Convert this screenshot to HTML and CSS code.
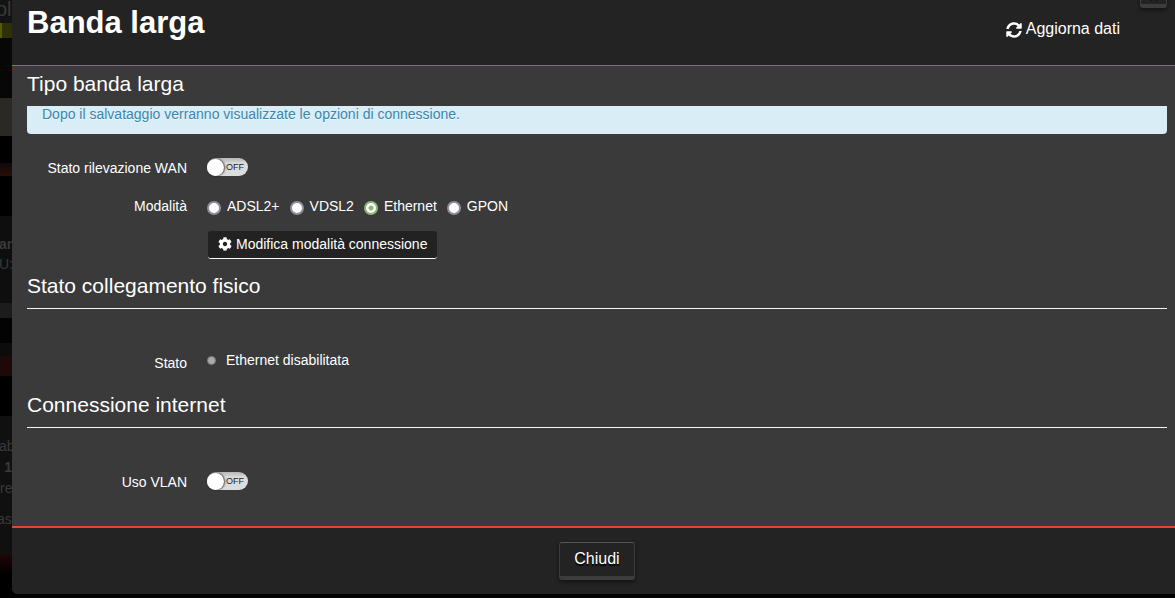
FILE: index.html
```
<!DOCTYPE html>
<html lang="it">

<head>
    <meta charset="UTF-8">
    <meta name="viewport" content="width=device-width, initial-scale=1.0">
    <title>Banda larga</title>
    <link rel="stylesheet" href="styles.css">
</head>

<body>
    <!-- dimmed page behind the modal -->
    <div class="backdrop" aria-hidden="true">
        <div class="strip strip_title">ol</div>
        <div class="strip strip_olive"></div>
        <div class="strip strip_dark"></div>
        <div class="strip strip_sand"></div>
        <div class="strip strip_gap"></div>
        <div class="strip strip_red"></div>
        <div class="strip strip_space"></div>
        <div class="strip strip_card">
            <p><b>an</b></p>
            <p>U:</p>
        </div>
        <div class="strip strip_bar"></div>
        <div class="strip strip_foot"></div>
        <div class="strip strip_wine"></div>
        <div class="strip strip_space"></div>
        <div class="strip strip_list">
            <p>ab</p>
            <p class="right"><b>1</b></p>
            <p class="right">re</p>
            <p class="last">as</p>
        </div>
        <div class="strip strip_end"></div>
    </div>

    <div class="modal" role="dialog" aria-labelledby="modal_title">
        <div class="modal_header">
            <h1 id="modal_title">Banda larga</h1>
            <a href="#" class="refresh">
                <svg viewBox="0 0 512 512" width="16" height="16"><path d="M370.72 133.28C339.458 104.008 298.888 87.962 255.848 88c-77.458.068-144.328 53.178-162.791 126.85-1.344 5.363-6.122 9.15-11.651 9.15H24.103c-7.498 0-13.194-6.807-11.807-14.176C33.933 94.924 134.813 8 256 8c66.448 0 126.791 26.136 171.315 68.685L463.03 40.97C478.149 25.851 504 36.559 504 57.941V192c0 13.255-10.745 24-24 24H345.941c-21.382 0-32.09-25.851-16.971-40.971l41.75-41.749zM32 296h134.059c21.382 0 32.09 25.851 16.971 40.971l-41.75 41.75c31.262 29.273 71.835 45.319 114.876 45.28 77.418-.07 144.315-53.144 162.787-126.849 1.344-5.363 6.122-9.15 11.651-9.15h57.304c7.498 0 13.194 6.807 11.807 14.176C478.067 417.076 377.187 504 256 504c-66.448 0-126.791-26.136-171.315-68.685L48.97 471.03C33.851 486.149 8 475.441 8 454.059V320c0-13.255 10.745-24 24-24z"/></svg>
                <span>Aggiorna dati</span>
            </a>
            <button type="button" class="btn btn_close" aria-label="Chiudi finestra">
                <svg viewBox="0 0 10 10" width="10" height="10"><path d="M1 1l8 8M9 1l-8 8" stroke="#0c0c0c" stroke-width="3"/></svg>
            </button>
        </div>

        <form class="modal_body">
            <h2 class="plain">Tipo banda larga</h2>
            <div class="alert">Dopo il salvataggio verranno visualizzate le opzioni di connessione.</div>

            <div class="row row_wan">
                <label class="name" for="wan_sensing">Stato rilevazione WAN</label>
                <label class="switch"><input type="checkbox" id="wan_sensing"><span>OFF</span></label>
            </div>
            <div class="row row_mode" role="radiogroup" aria-labelledby="mode_label">
                <span class="name" id="mode_label">Modalità</span>
                <div class="radios">
                    <label><input type="radio" name="mode" value="adsl"><span>ADSL2+</span></label>
                    <label><input type="radio" name="mode" value="vdsl"><span>VDSL2</span></label>
                    <label><input type="radio" name="mode" value="eth" checked><span>Ethernet</span></label>
                    <label><input type="radio" name="mode" value="gpon"><span>GPON</span></label>
                </div>
            </div>
            <button type="button" class="btn_edit">
                <svg viewBox="0 0 512 512" width="14" height="14"><path d="M487.4 315.7l-42.6-24.6c4.3-23.2 4.3-47 0-70.2l42.6-24.6c4.9-2.8 7.1-8.6 5.5-14-11.1-35.6-30-67.8-54.7-94.6-3.8-4.1-10-5.1-14.8-2.3L380.8 110c-17.9-15.4-38.5-27.3-60.8-35.1V25.8c0-5.6-3.9-10.5-9.4-11.7-36.7-8.2-74.3-7.8-109.2 0-5.5 1.2-9.4 6.1-9.4 11.7V75c-22.2 7.9-42.8 19.8-60.8 35.1L88.7 85.5c-4.9-2.8-11-1.9-14.8 2.3-24.7 26.7-43.6 58.9-54.7 94.6-1.7 5.4.6 11.2 5.5 14L67.3 221c-4.3 23.2-4.3 47 0 70.2l-42.6 24.6c-4.9 2.8-7.1 8.6-5.5 14 11.1 35.6 30 67.8 54.7 94.6 3.8 4.1 10 5.1 14.8 2.3l42.6-24.6c17.9 15.4 38.5 27.3 60.8 35.1v49.2c0 5.6 3.9 10.5 9.4 11.7 36.7 8.2 74.3 7.8 109.2 0 5.5-1.2 9.4-6.1 9.4-11.7v-49.2c22.2-7.9 42.8-19.8 60.8-35.1l42.6 24.6c4.9 2.8 11 1.9 14.8-2.3 24.7-26.7 43.6-58.9 54.7-94.6 1.5-5.5-.7-11.3-5.6-14.1zM256 336c-44.1 0-80-35.9-80-80s35.9-80 80-80 80 35.9 80 80-35.9 80-80 80z"/></svg>
                <span>Modifica modalità connessione</span>
            </button>

            <h2>Stato collegamento fisico</h2>
            <div class="row row_state">
                <span class="name">Stato</span>
                <div class="state"><i class="led"></i><span>Ethernet disabilitata</span></div>
            </div>

            <h2>Connessione internet</h2>
            <div class="row row_vlan">
                <label class="name" for="use_vlan">Uso VLAN</label>
                <label class="switch"><input type="checkbox" id="use_vlan"><span>OFF</span></label>
            </div>
        </form>

        <div class="modal_footer">
            <button type="button" class="btn">Chiudi</button>
        </div>
    </div>
</body>

</html>
```
FILE: styles.css
```
* {
    margin: 0;
    padding: 0;
    box-sizing: border-box;
}

body {
    display: flex;
    align-items: flex-start;
    min-height: 100vh;
    overflow: hidden;
    background-color: #000;
    color: #fff;
    font: 14px/20px "Liberation Sans", Arial, sans-serif;
}

button {
    color: #fff;
    font-family: inherit;
    cursor: pointer;
}

svg {
    display: block;
    fill: currentColor;
}

/* page behind */
.backdrop {
    width: 12px;
    overflow: hidden;
    color: #3a3a3a;
    white-space: nowrap;
}

.strip_title {
    height: 23px;
    background-color: #131313;
    font-size: 20px;
    line-height: 18px;
    text-indent: -4px;
}

.strip_olive {
    height: 15px;
    background-color: #2f3006;
    border-left: 2px solid #5a5a00;
}

.strip_dark {
    height: 60px;
    background-color: #070707;
}

.strip_sand {
    height: 38px;
    background-color: #2b2925;
}

.strip_gap {
    height: 27px;
}

.strip_red {
    height: 13px;
    background: linear-gradient(#120909, #260e08);
}

.strip_space {
    height: 40px;
}

.strip_card {
    height: 87px;
    padding-top: 18px;
    background-color: #0e0e0e;
}

.strip_card p {
    text-indent: -1px;
}

.strip_bar {
    height: 15px;
    background-color: #1c1c1c;
}

.strip_foot {
    height: 38px;
    background: linear-gradient(#030303 65%, #0c0c0c 65%);
}

.strip_wine {
    height: 20px;
    background-color: #1e0909;
}

.strip_list {
    height: 139px;
    padding-top: 20px;
    background-color: #101010;
}

.strip_list p {
    height: 21px;
    text-indent: -1px;
}

.strip_list .right {
    text-align: right;
    text-indent: 0;
}

.strip_list .last {
    margin-top: 10px;
    text-indent: -3px;
}

.strip_end {
    height: 20px;
    background: linear-gradient(#220404, #000);
}

/* modal, its right edge runs out of the window */
.modal {
    flex: 1;
    margin-right: -7px;
    border-radius: 0 0 6px 6px;
    background-color: #3a3a3a;
    overflow: hidden;
}

.modal_header {
    position: relative;
    display: flex;
    justify-content: space-between;
    align-items: flex-start;
    height: 66px;
    padding: 0 62px 0 15px;
    border-bottom: 1px solid #e04a3c;
    background-color: #232323;
}

h1 {
    font-size: 31px;
    line-height: 46px;
}

.refresh {
    display: flex;
    align-items: center;
    gap: 4px;
    margin-top: 19px;
    color: #fff;
    font-size: 16px;
    text-decoration: none;
}

.refresh svg {
    margin-top: 2px;
}

.btn {
    height: 38px;
    padding: 0 14px 2px;
    border: 1px solid #3c3c3c;
    border-top-color: #555;
    border-bottom: 4px solid #3c3c3c;
    border-radius: 3px;
    background-color: #232323;
    box-shadow: 0 2px 4px rgba(0, 0, 0, .5);
    font-size: 16px;
    text-shadow: 0 2px 1px #000;
}

.btn_close {
    position: absolute;
    top: -30px;
    right: 15px;
    display: flex;
    justify-content: center;
    align-items: flex-end;
    width: 27px;
    padding: 0 0 3px;
}

.modal_body {
    padding: 0 15px 34px;
}

h2 {
    padding-bottom: 4px;
    border-bottom: 1px solid #f5f5f5;
    font-size: 21px;
    font-weight: normal;
    line-height: 36px;
}

h2.plain {
    border-bottom: 0;
}

.alert {
    padding: 0 15px 12px;
    border-radius: 0 0 4px 4px;
    background-color: #d9edf7;
    color: #3a87ad;
    line-height: 16px;
    text-shadow: 0 1px 0 rgba(255, 255, 255, .5);
}

.row {
    display: flex;
    align-items: flex-start;
    gap: 20px;
}

.name {
    width: 160px;
    text-align: right;
}

.row_wan {
    margin: 24px 0 18px;
}

.row_mode {
    margin-bottom: 15px;
}

.row_state {
    margin: 41px 0 14px;
}

.row_state .name {
    padding-top: 3px;
}

.row_vlan {
    margin-top: 44px;
}

/* on/off switch */
.switch {
    display: flex;
    align-items: center;
    gap: 2px;
    width: 41px;
    height: 18px;
    border-radius: 9px;
    background: linear-gradient(#b5b5b5, #dcdcdc 30%, #dcdcdc);
    color: #222;
    font-size: 9px;
    line-height: 18px;
    cursor: pointer;
}

.switch input {
    appearance: none;
    width: 17px;
    height: 17px;
    border-radius: 50%;
    background-color: #fff;
    box-shadow: 1px 0 2px rgba(0, 0, 0, .7);
}

.radios {
    display: flex;
    gap: 10px;
}

.radios label {
    display: flex;
    gap: 6px;
}

.radios input {
    appearance: none;
    width: 14px;
    height: 14px;
    margin-top: 5px;
    border: 2px solid #8f8f9d;
    border-radius: 50%;
    background-color: #fff;
}

.radios input:checked {
    border-color: #8fb573;
    background: radial-gradient(circle, #8fb573 2px, #fff 3px);
}

.btn_edit {
    display: flex;
    align-items: center;
    gap: 4px;
    height: 28px;
    margin: 0 0 9px 181px;
    padding: 0 10px 2px;
    border: 0;
    border-bottom: 1px solid #fff;
    border-radius: 3px;
    background-color: #222;
    font-size: 14px;
}

.state {
    display: flex;
    align-items: center;
    gap: 10px;
}

.led {
    width: 9px;
    height: 9px;
    border: 1px solid #777;
    border-radius: 50%;
    background-color: #aaa;
}

.modal_footer {
    padding: 14px 15px;
    border-top: 2px solid #f23c30;
    background-color: #232323;
    text-align: center;
    line-height: 0;
}
```
